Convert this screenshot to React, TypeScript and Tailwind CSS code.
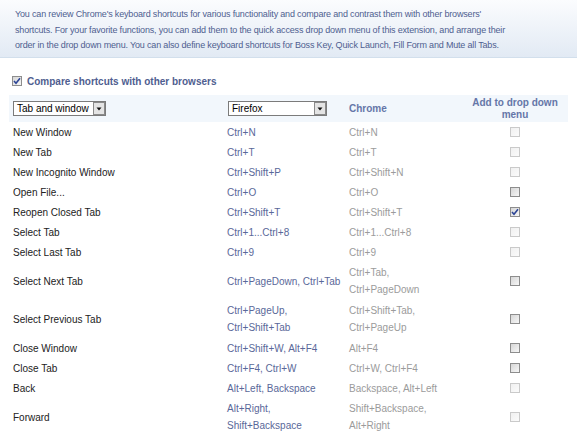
import React from "react";

type CB = "disabled" | "enabled" | "checked";
type Row = { label: string; ff: string[]; ch: string[]; cb: CB };

const rows: Row[] = [
  { label: "New Window", ff: ["Ctrl+N"], ch: ["Ctrl+N"], cb: "disabled" },
  { label: "New Tab", ff: ["Ctrl+T"], ch: ["Ctrl+T"], cb: "disabled" },
  { label: "New Incognito Window", ff: ["Ctrl+Shift+P"], ch: ["Ctrl+Shift+N"], cb: "disabled" },
  { label: "Open File...", ff: ["Ctrl+O"], ch: ["Ctrl+O"], cb: "enabled" },
  { label: "Reopen Closed Tab", ff: ["Ctrl+Shift+T"], ch: ["Ctrl+Shift+T"], cb: "checked" },
  { label: "Select Tab", ff: ["Ctrl+1...Ctrl+8"], ch: ["Ctrl+1...Ctrl+8"], cb: "disabled" },
  { label: "Select Last Tab", ff: ["Ctrl+9"], ch: ["Ctrl+9"], cb: "disabled" },
  { label: "Select Next Tab", ff: ["Ctrl+PageDown, Ctrl+Tab"], ch: ["Ctrl+Tab,", "Ctrl+PageDown"], cb: "enabled" },
  { label: "Select Previous Tab", ff: ["Ctrl+PageUp,", "Ctrl+Shift+Tab"], ch: ["Ctrl+Shift+Tab,", "Ctrl+PageUp"], cb: "enabled" },
  { label: "Close Window", ff: ["Ctrl+Shift+W, Alt+F4"], ch: ["Alt+F4"], cb: "enabled" },
  { label: "Close Tab", ff: ["Ctrl+F4, Ctrl+W"], ch: ["Ctrl+W, Ctrl+F4"], cb: "enabled" },
  { label: "Back", ff: ["Alt+Left, Backspace"], ch: ["Backspace, Alt+Left"], cb: "disabled" },
  { label: "Forward", ff: ["Alt+Right,", "Shift+Backspace"], ch: ["Shift+Backspace,", "Alt+Right"], cb: "disabled" },
];

function Check({ state }: { state: CB }) {
  if (state === "disabled") {
    return (
      <div className="w-[10px] h-[10px] border border-[#cacaca] bg-gradient-to-br from-[#f0f0f0] to-[#fbfbfb]" />
    );
  }
  return (
    <div className="w-[10px] h-[10px] border border-[#8d8d8d] bg-gradient-to-br from-[#d6d6d6] to-[#f7f7f7] flex items-center justify-center">
      {state === "checked" && (
        <svg width="8" height="8" viewBox="0 0 8 8">
          <path d="M1 4 L3 6.2 L7 1.2" fill="none" stroke="#2d4596" strokeWidth="1.6" />
        </svg>
      )}
    </div>
  );
}

function FakeSelect({ text, width }: { text: string; width: string }) {
  return (
    <div className={`${width} h-[15px] border border-[#7b7b7b] bg-white flex items-center justify-between`}>
      <span className="pl-[3px] text-[10px] leading-[13px] text-black">{text}</span>
      <div className="w-[12px] h-[13px] border border-[#8a8a8a] bg-[#e4e4e4] flex items-center justify-center">
        <svg width="6" height="4" viewBox="0 0 6 4">
          <path d="M0.5 0.5 L5.5 0.5 L3 3.5 Z" fill="#111" />
        </svg>
      </div>
    </div>
  );
}

export default function App() {
  return (
    <div className="w-[577px] h-[438px] bg-white overflow-hidden" style={{ fontFamily: '"Liberation Sans", Arial, sans-serif' }}>
      <div className="bg-gradient-to-b from-[#fbfcfe] to-[#e2eaf4] border-b border-[#d2dfec] pl-[15px] pt-[7px] pb-[3px] h-[58px] text-[9px] tracking-[-0.17px] leading-[15.5px] text-[#4f5e90] whitespace-nowrap">
        You can review Chrome's keyboard shortcuts for various functionality and compare and contrast them with other browsers'
        <br />
        shortcuts. For your favorite functions, you can add them to the quick access drop down menu of this extension, and arrange their
        <br />
        order in the drop down menu. You can also define keyboard shortcuts for Boss Key, Quick Launch, Fill Form and Mute all Tabs.
      </div>

      <div className="mt-[16px] ml-[12px] h-[14px] flex items-center gap-[5px]">
        <Check state="checked" />
        <span className="text-[10px] font-bold text-[#4f5e90]">Compare shortcuts with other browsers</span>
      </div>

      <div className="mt-[7px] ml-[9px] w-[559px]">
        <div className="h-[27px] bg-[#f2f7fc] grid grid-cols-[218px_122px_115px_104px] items-center">
          <div className="pl-[4px]">
            <FakeSelect text="Tab and window" width="w-[93px]" />
          </div>
          <div className="pl-[1px]">
            <FakeSelect text="Firefox" width="w-[99px]" />
          </div>
          <div className="text-[10px] font-bold text-[#6576a8]">Chrome</div>
          <div className="text-[10px] font-bold text-[#6576a8] text-center leading-[12px] pr-[2px]">
            Add to drop down
            <br />
            menu
          </div>
        </div>
        {rows.map((r) => {
          const tall = r.ff.length > 1 || r.ch.length > 1;
          return (
            <div
              key={r.label}
              className={`${tall ? "h-[38px]" : "h-[20px]"} grid grid-cols-[218px_122px_115px_104px] items-center text-[10px] leading-[17px] whitespace-nowrap`}
            >
              <div className="pl-[4px] text-[#222222]">{r.label}</div>
              <div className="text-[#5a6899]">
                {r.ff.map((t) => (
                  <div key={t}>{t}</div>
                ))}
              </div>
              <div className="text-[#9b9b9b]">
                {r.ch.map((t) => (
                  <div key={t}>{t}</div>
                ))}
              </div>
              <div className="flex justify-center pr-[2px]">
                <Check state={r.cb} />
              </div>
            </div>
          );
        })}
      </div>
    </div>
  );
}
